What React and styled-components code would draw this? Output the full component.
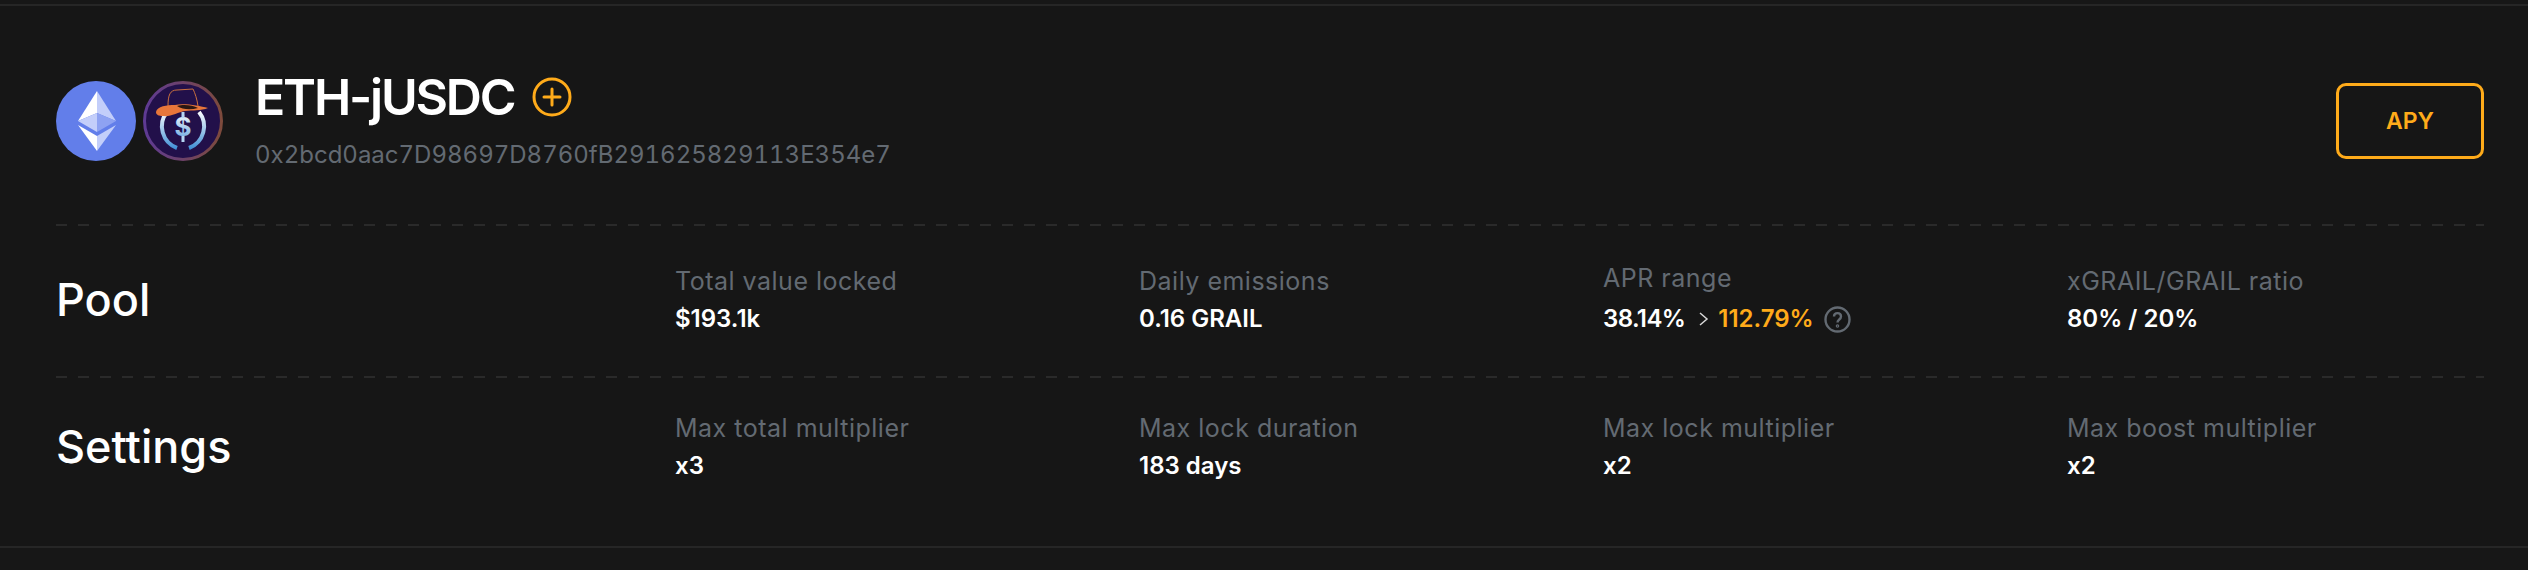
import React from 'react';
import styled, { createGlobalStyle } from 'styled-components';

const GlobalStyle = createGlobalStyle`
  html, body {
    margin: 0;
    background: #131313;
  }
`;

const Page = styled.div`
  box-sizing: border-box;
  width: 2528px;
  height: 570px;
  padding-top: 4px;
  background: #171717;
  font-family: Inter, "Noto Sans", sans-serif;
  overflow: hidden;
`;

const Panel = styled.section`
  box-sizing: border-box;
  height: 544px;
  padding: 0 44px 0 56px;
  background: #161616;
  border-top: 2px solid #262626;
  border-bottom: 2px solid #262626;
`;

const Header = styled.header`
  box-sizing: border-box;
  height: 218px;
  padding-top: 12px;
  display: flex;
  align-items: center;
  justify-content: space-between;
`;

const Pair = styled.div`
  display: flex;
  align-items: center;
  gap: 7px;
`;

const Names = styled.div`
  margin-left: 25px;
  display: flex;
  flex-direction: column;
`;

const TitleRow = styled.div`
  display: flex;
  align-items: center;
  gap: 18px;
  height: 50px;
  margin-bottom: 18px;
`;

const Title = styled.h1`
  margin: 0;
  color: #fff;
  font-size: 50px;
  line-height: 50px;
  font-weight: 600;
  letter-spacing: -2.2px;
`;

const Address = styled.div`
  color: #636a72;
  font-size: 24px;
  line-height: 30px;
  font-variant-numeric: tabular-nums;
`;

const ApyButton = styled.button`
  box-sizing: border-box;
  width: 148px;
  height: 76px;
  background: transparent;
  border: 3px solid #ffab1a;
  border-radius: 10px;
  color: #ffab1a;
  font: 600 23px Inter, sans-serif;
`;

const Section = styled.div`
  display: grid;
  grid-template-columns: 619px repeat(3, 464px) 1fr;
  align-items: center;
  height: ${(p) => p.$height}px;
  background-image: repeating-linear-gradient(to right, #2a2a2a 0 11px, transparent 11px 22px);
  background-size: 100% 2px;
  background-repeat: no-repeat;
`;

const SectionName = styled.h2`
  margin: 0;
  color: #fff;
  font-size: 45px;
  line-height: 50px;
  font-weight: 500;
`;

const Stat = styled.div`
  display: flex;
  flex-direction: column;
  gap: ${(p) => p.$gap || 8}px;
  margin-top: ${(p) => p.$offset || 0}px;
`;

const Label = styled.div`
  color: #636a72;
  font-size: 25px;
  line-height: 30px;
  letter-spacing: 0.5px;
`;

const Value = styled.div`
  display: flex;
  align-items: center;
  color: #fff;
  font-size: 24px;
  line-height: 30px;
  font-weight: 600;
`;

const Percent = styled.span`
  color: ${(p) => p.$color};
  letter-spacing: ${(p) => p.$tight || 0}px;
`;

const Chevron = styled.svg`
  width: 12px;
  height: 14px;
  margin: 0 8px 0 13px;
`;

const Help = styled.svg`
  width: 27px;
  height: 27px;
  margin-left: 10px;
`;

const Coin = styled.svg`
  display: block;
  width: 80px;
  height: 80px;
`;

const PlusIcon = styled.svg`
  display: block;
  width: 40px;
  height: 40px;
`;

function EthCoin() {
  return (
    <Coin viewBox="0 0 80 80">
      <circle cx="40" cy="40" r="40" fill="#627eea" />
      <path d="M41 10 L22 40 L41 32 Z" fill="#fff" />
      <path d="M41 10 L60 40 L41 32 Z" fill="#c3cefa" />
      <path d="M41 32 L22 40 L41 51 Z" fill="#c3cefa" />
      <path d="M41 32 L60 40 L41 51 Z" fill="#8ea2f2" />
      <path d="M22 44 L41 70 L41 55 Z" fill="#fff" />
      <path d="M60 44 L41 70 L41 55 Z" fill="#c3cefa" />
    </Coin>
  );
}

function JusdcCoin() {
  return (
    <Coin viewBox="0 0 80 80">
      <defs>
        <linearGradient id="ring" x1="0" y1="0" x2="1" y2="0">
          <stop offset="0" stopColor="#5e3a94" />
          <stop offset="1" stopColor="#7d4a3c" />
        </linearGradient>
        <linearGradient id="arc" gradientUnits="userSpaceOnUse" x1="0" y1="30" x2="0" y2="68">
          <stop offset="0" stopColor="#ffffff" />
          <stop offset="1" stopColor="#3f8fd6" />
        </linearGradient>
      </defs>
      <circle cx="40" cy="40" r="38.5" fill="#22104a" stroke="url(#ring)" strokeWidth="3" />
      <path d="M24 31 A23 23 0 0 0 34 67 M56 31 A23 23 0 0 1 46 67" fill="none" stroke="url(#arc)" strokeWidth="4" />
      <text x="40" y="55" textAnchor="middle" fontFamily="Inter, sans-serif" fontWeight="700" fontSize="26" fill="url(#arc)">$</text>
      <path d="M40 31 V37 M40 55 V61" stroke="#b4d6f3" strokeWidth="3" />
      <path d="M25 25 C25 14 27 9 34 9 L50 8 C52 12 54 18 55 25" fill="#22104a" stroke="#c9703f" strokeWidth="1" />
      <path d="M13 31 C14 25 24 24 32 24 C42 22 56 25 65 27 C58 30 50 29 42 30 C35 31 28 36 20 35 C16 35 13 34 13 31 Z" fill="#e8763a" />
      <path d="M34 25 C40 23 50 24 55 27 C48 29 40 29 34 25 Z" fill="#2c1712" />
    </Coin>
  );
}

function AddIcon() {
  return (
    <PlusIcon viewBox="0 0 40 40" fill="none" stroke="#ffab1a" strokeWidth="3">
      <circle cx="20" cy="20" r="18" />
      <path d="M20 12 V28 M12 20 H28" strokeLinecap="round" />
    </PlusIcon>
  );
}

const pool = [
  { label: 'Total value locked', value: '$193.1k' },
  { label: 'Daily emissions', value: '0.16 GRAIL' },
  { label: 'APR range', range: true, offset: -3, gap: 11 },
  { label: 'xGRAIL/GRAIL ratio', value: '80% / 20%' },
];

const settings = [
  { label: 'Max total multiplier', value: 'x3' },
  { label: 'Max lock duration', value: '183 days' },
  { label: 'Max lock multiplier', value: 'x2' },
  { label: 'Max boost multiplier', value: 'x2' },
];

function AprRange() {
  return (
    <Value>
      <Percent $color="#fff" $tight={-0.6}>38.14%</Percent>
      <Chevron viewBox="0 0 12 14" fill="none" stroke="#d8d8d8" strokeWidth="1.5">
        <path d="M2 1 L9 7 L2 13" />
      </Chevron>
      <Percent $color="#ffab1a">112.79%</Percent>
      <Help viewBox="0 0 27 27" fill="none" stroke="#636a72" strokeWidth="2.4">
        <circle cx="13.5" cy="13.5" r="12" />
        <path d="M10 10.5 C10 6 17 6 17 10.5 C17 13.5 13.5 13.5 13.5 16.5" />
        <circle cx="13.5" cy="20" r="0.6" />
      </Help>
    </Value>
  );
}

export default function App() {
  return (
    <Page>
      <GlobalStyle />
      <Panel>
        <Header>
          <Pair>
            <EthCoin />
            <JusdcCoin />
            <Names>
              <TitleRow>
                <Title>ETH-jUSDC</Title>
                <AddIcon />
              </TitleRow>
              <Address>0x2bcd0aac7D98697D8760fB291625829113E354e7</Address>
            </Names>
          </Pair>
          <ApyButton>APY</ApyButton>
        </Header>
        <Section $height={152}>
          <SectionName>Pool</SectionName>
          {pool.map((s) => (
            <Stat key={s.label} $offset={s.offset} $gap={s.gap}>
              <Label>{s.label}</Label>
              {s.range ? <AprRange /> : <Value>{s.value}</Value>}
            </Stat>
          ))}
        </Section>
        <Section $height={142}>
          <SectionName>Settings</SectionName>
          {settings.map((s) => (
            <Stat key={s.label}>
              <Label>{s.label}</Label>
              <Value>{s.value}</Value>
            </Stat>
          ))}
        </Section>
      </Panel>
    </Page>
  );
}
